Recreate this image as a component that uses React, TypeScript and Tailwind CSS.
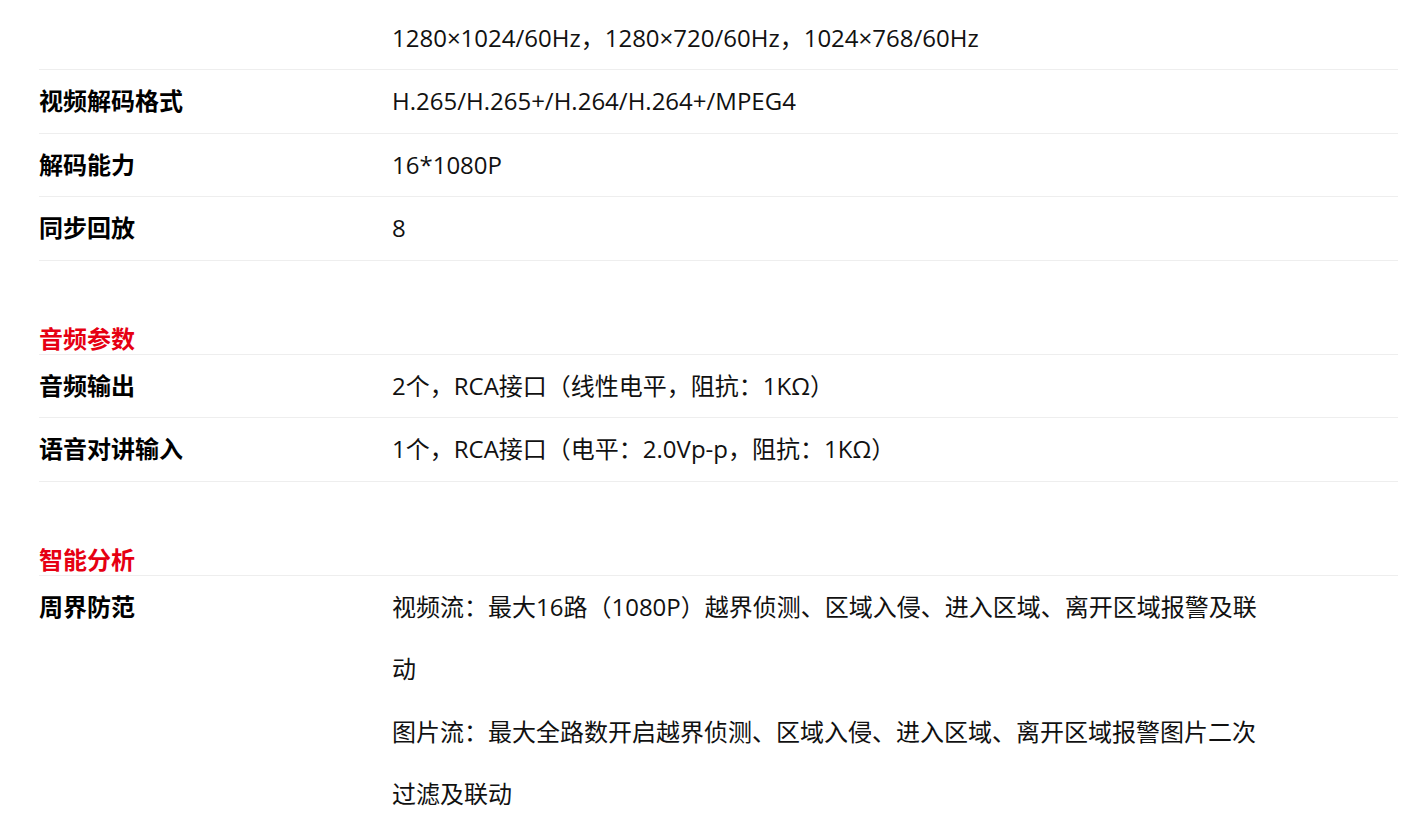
const font = { fontFamily: '"Open Sans", "Noto Sans CJK SC", sans-serif' };

type Row = { label: string; value: string[] };

function SpecRow({ label, value }: Row) {
  return (
    <div className="flex border-b border-[#eeeeee] text-[24px] leading-[62.5px]">
      <div className="w-[353px] shrink-0 font-bold text-black">{label}</div>
      <div className="w-[876px] text-[#111111]">
        {value.map((v, i) => (
          <p key={i}>{v}</p>
        ))}
      </div>
    </div>
  );
}

function SectionTitle({ title }: { title: string }) {
  return (
    <div className="border-b border-[#eeeeee] pt-[62px] text-[24px] font-bold leading-[31px] text-[#e60012]">
      {title}
    </div>
  );
}

export default function App() {
  return (
    <div className="min-h-screen bg-white pt-[6.5px]" style={font}>
      <div className="ml-[39px] w-[1359px]">
        <div className="flex border-b border-[#eeeeee] text-[24px] leading-[62.5px]">
          <div className="w-[353px] shrink-0" />
          <div className="text-[#111111]">1280×1024/60Hz，1280×720/60Hz，1024×768/60Hz</div>
        </div>
        <SpecRow label="视频解码格式" value={["H.265/H.265+/H.264/H.264+/MPEG4"]} />
        <SpecRow label="解码能力" value={["16*1080P"]} />
        <SpecRow label="同步回放" value={["8"]} />

        <SectionTitle title="音频参数" />
        <SpecRow label="音频输出" value={["2个，RCA接口（线性电平，阻抗：1KΩ）"]} />
        <SpecRow label="语音对讲输入" value={["1个，RCA接口（电平：2.0Vp-p，阻抗：1KΩ）"]} />

        <SectionTitle title="智能分析" />
        <div className="flex text-[24px] leading-[62.5px]">
          <div className="w-[353px] shrink-0 font-bold text-black">周界防范</div>
          <div className="w-[876px] text-[#111111]">
            <p>视频流：最大16路（1080P）越界侦测、区域入侵、进入区域、离开区域报警及联动</p>
            <p>图片流：最大全路数开启越界侦测、区域入侵、进入区域、离开区域报警图片二次过滤及联动</p>
          </div>
        </div>
      </div>
    </div>
  );
}
